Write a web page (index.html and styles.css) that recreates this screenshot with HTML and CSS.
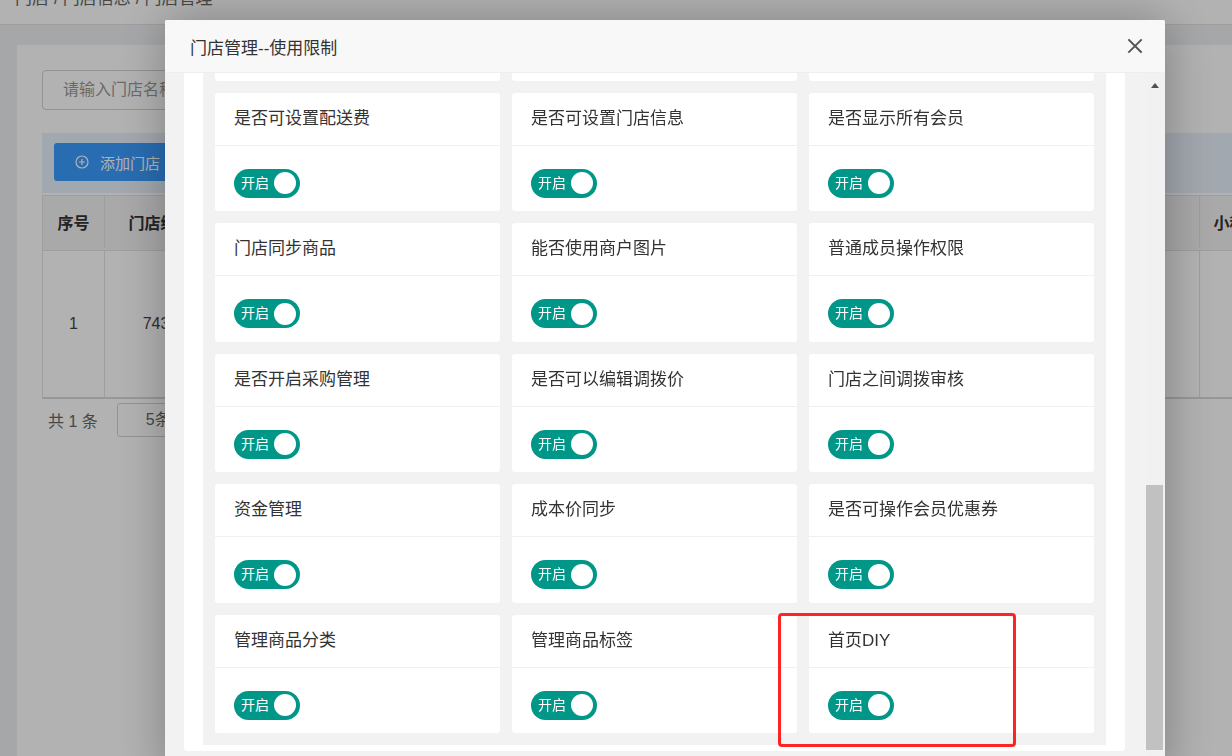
FILE: index.html
```html
<!DOCTYPE html>
<html lang="zh-CN">
<head>
<meta charset="utf-8">
<title>门店管理</title>
<link rel="stylesheet" href="styles.css">
</head>
<body>
<div class="page">
  <div class="crumb"><span class="crumb-text">门店<span class="sep">/</span>门店信息<span class="sep">/</span>门店管理</span></div>
  <div class="main">
    <div class="box">
      <div class="search"><div class="input">请输入门店名称</div></div>
      <div class="toolbar">
        <div class="btn">
          <svg class="btn-ico" viewBox="0 0 14 14" width="14" height="14"><circle cx="7" cy="7" r="6" fill="none" stroke="#fff" stroke-width="1.2"/><path d="M7 4v6M4 7h6" stroke="#fff" stroke-width="1.2"/></svg>
          <span>添加门店</span>
        </div>
      </div>
      <div class="table">
        <div class="tr th">
          <div class="cell">序号</div>
          <div class="cell">门店编号</div>
          <div class="cell">门店名称</div>
          <div class="cell">门店地址</div>
          <div class="cell">营业状态</div>
          <div class="cell">小程序</div>
        </div>
        <div class="tr td">
          <div class="cell">1</div>
          <div class="cell">7432</div>
          <div class="cell">测试门店</div>
          <div class="cell">门店地址</div>
          <div class="cell">营业中营业中营</div>
          <div class="cell"></div>
        </div>
      </div>
      <div class="pager"><span>共 1 条</span><div class="select">5条/页</div></div>
    </div>
  </div>
</div>

<div class="shade"></div>

<div class="layer">
  <div class="layer-title">
    <span>门店管理--使用限制</span>
    <svg class="close" viewBox="0 0 16 16" width="16" height="16"><path d="M2 2L14 14M14 2L2 14" stroke="#555" stroke-width="1.9" stroke-linecap="square"/></svg>
  </div>
  <div class="layer-body">
    <div class="scroll">
      <div class="panel">
        <div class="grid">
          <div class="card"><div class="card-hd">是否可设置商品</div><div class="card-bd"><div class="switch"><span>开启</span><i class="knob"></i></div></div></div>
          <div class="card"><div class="card-hd">是否可设置价格</div><div class="card-bd"><div class="switch"><span>开启</span><i class="knob"></i></div></div></div>
          <div class="card"><div class="card-hd">是否可设置库存</div><div class="card-bd"><div class="switch"><span>开启</span><i class="knob"></i></div></div></div>

          <div class="card"><div class="card-hd">是否可设置配送费</div><div class="card-bd"><div class="switch"><span>开启</span><i class="knob"></i></div></div></div>
          <div class="card"><div class="card-hd">是否可设置门店信息</div><div class="card-bd"><div class="switch"><span>开启</span><i class="knob"></i></div></div></div>
          <div class="card"><div class="card-hd">是否显示所有会员</div><div class="card-bd"><div class="switch"><span>开启</span><i class="knob"></i></div></div></div>

          <div class="card"><div class="card-hd">门店同步商品</div><div class="card-bd"><div class="switch"><span>开启</span><i class="knob"></i></div></div></div>
          <div class="card"><div class="card-hd">能否使用商户图片</div><div class="card-bd"><div class="switch"><span>开启</span><i class="knob"></i></div></div></div>
          <div class="card"><div class="card-hd">普通成员操作权限</div><div class="card-bd"><div class="switch"><span>开启</span><i class="knob"></i></div></div></div>

          <div class="card"><div class="card-hd">是否开启采购管理</div><div class="card-bd"><div class="switch"><span>开启</span><i class="knob"></i></div></div></div>
          <div class="card"><div class="card-hd">是否可以编辑调拨价</div><div class="card-bd"><div class="switch"><span>开启</span><i class="knob"></i></div></div></div>
          <div class="card"><div class="card-hd">门店之间调拨审核</div><div class="card-bd"><div class="switch"><span>开启</span><i class="knob"></i></div></div></div>

          <div class="card"><div class="card-hd">资金管理</div><div class="card-bd"><div class="switch"><span>开启</span><i class="knob"></i></div></div></div>
          <div class="card"><div class="card-hd">成本价同步</div><div class="card-bd"><div class="switch"><span>开启</span><i class="knob"></i></div></div></div>
          <div class="card"><div class="card-hd">是否可操作会员优惠券</div><div class="card-bd"><div class="switch"><span>开启</span><i class="knob"></i></div></div></div>

          <div class="card"><div class="card-hd">管理商品分类</div><div class="card-bd"><div class="switch"><span>开启</span><i class="knob"></i></div></div></div>
          <div class="card"><div class="card-hd">管理商品标签</div><div class="card-bd"><div class="switch"><span>开启</span><i class="knob"></i></div></div></div>
          <div class="card"><div class="card-hd">首页DIY</div><div class="card-bd"><div class="switch"><span>开启</span><i class="knob"></i></div></div><div class="mark"></div></div>
        </div>
      </div>
    </div>
    <div class="scrollbar">
      <div class="sb-up"><i class="sb-arrow"></i></div>
      <div class="sb-thumb"></div>
    </div>
  </div>
</div>
</body>
</html>
```

FILE: styles.css
```css
html, body {
  margin: 0;
  padding: 0;
}
body {
  width: 1232px;
  height: 756px;
  overflow: hidden;
  background: #eef0f3;
  font-family: "Liberation Sans", "Noto Sans CJK SC", sans-serif;
}

/* ---------- background page ---------- */
.page {
  width: 1420px;
}
.crumb {
  height: 25px;
  box-sizing: border-box;
  background: #fff;
  border-bottom: 1px solid #e2e2e2;
  padding-left: 15px;
  font-size: 17px;
  color: #666;
  overflow: hidden;
}
.crumb-text {
  display: block;
  line-height: 17px;
  margin-top: -10px;
  white-space: nowrap;
}
.sep {
  margin: 0 4px 0 5px;
}
.main {
  padding: 20px 0 0 17px;
}
.box {
  width: 1400px;
  height: 720px;
  box-sizing: border-box;
  background: #fff;
  padding: 25px;
}
.input {
  width: 260px;
  height: 40px;
  box-sizing: border-box;
  border: 1px solid #d2d2d2;
  border-radius: 4px;
  padding-left: 20px;
  line-height: 38px;
  font-size: 16px;
  color: #999;
}
.toolbar {
  margin-top: 23px;
  height: 60px;
  box-sizing: border-box;
  background: #e9f1fb;
  padding: 10px 12px;
}
.btn {
  display: inline-flex;
  align-items: center;
  gap: 11px;
  height: 38px;
  padding: 0 22px 0 21px;
  background: #3a9cff;
  color: #fff;
  border-radius: 3px;
  font-size: 15px;
}
.btn-ico {
  display: block;
}
.table {
  margin-top: 2px;
  border-left: 1px solid #e2e2e2;
  border-top: 1px solid #e2e2e2;
  width: 1233px;
}
.tr {
  display: grid;
  grid-template-columns: 62px 112px 400px 401px 182px 76px;
  border-bottom: 1px solid #e2e2e2;
  box-sizing: border-box;
}
.th {
  height: 55px;
  background: #f2f2f2;
  font-weight: bold;
  color: #333;
  padding-bottom: 3px;
}
.td {
  height: 148px;
  border-bottom: 2px solid #d9d9d9;
  color: #444;
}
.cell {
  display: flex;
  align-items: center;
  justify-content: center;
  border-right: 1px solid #e2e2e2;
  font-size: 16px;
  white-space: nowrap;
  overflow: hidden;
}
.pager {
  display: flex;
  align-items: center;
  gap: 19px;
  margin-top: 4px;
  padding-left: 6px;
  font-size: 16px;
  color: #666;
}
.select {
  width: 100px;
  height: 34px;
  box-sizing: border-box;
  border: 1px solid #d2d2d2;
  border-radius: 3px;
  padding-left: 28px;
  line-height: 32px;
}

/* ---------- shade + layer ---------- */
.shade {
  position: fixed;
  left: 0;
  top: 0;
  right: 0;
  bottom: 0;
  background: rgba(0, 0, 0, 0.3);
}
.layer {
  position: fixed;
  left: 165px;
  top: 20px;
  width: 1000px;
  height: 760px;
  background: #f2f2f2;
  border-radius: 2px;
  box-shadow: 1px 1px 50px rgba(0, 0, 0, 0.3);
  display: flex;
  flex-direction: column;
  overflow: hidden;
}
.layer-title {
  flex: none;
  height: 53px;
  box-sizing: border-box;
  border-bottom: 1px solid #eee;
  background: #f8f8f8;
  display: flex;
  align-items: center;
  justify-content: space-between;
  padding: 0 22px 0 25px;
  font-size: 17px;
  color: #333;
}
.close {
  display: block;
}
.layer-body {
  flex: 1;
  min-height: 0;
  display: flex;
}
.scroll {
  flex: 1;
  overflow: hidden;
  padding: 0 21px 0 19px;
}
.panel {
  background: #fff;
  border-radius: 4px;
  padding: 19px 19px 6px;
  margin-top: -142px;
}
.grid {
  background: #f2f2f2;
  padding: 12px;
  display: grid;
  grid-template-columns: repeat(3, 285px);
  column-gap: 12px;
  row-gap: 12px;
}
.card {
  position: relative;
  background: #fff;
  border-radius: 3px;
}
.card-hd {
  height: 53px;
  box-sizing: border-box;
  border-bottom: 1px solid #f0f0f0;
  padding: 0 19px;
  line-height: 52px;
  font-size: 17px;
  color: #333;
  white-space: nowrap;
}
.card-bd {
  padding: 23px 19px 13.5px;
}
.switch {
  display: flex;
  align-items: center;
  justify-content: space-between;
  width: 66px;
  height: 29px;
  box-sizing: border-box;
  border-radius: 15px;
  background: #009688;
  padding: 0 4px 0 7px;
  color: #fff;
  font-size: 14px;
  line-height: 29px;
}
.knob {
  display: block;
  width: 22px;
  height: 22px;
  border-radius: 50%;
  background: #fff;
}
.mark {
  position: absolute;
  left: -31px;
  top: -2px;
  width: 238px;
  height: 134px;
  box-sizing: border-box;
  border: 3px solid #ff2424;
  border-radius: 4px;
}

/* ---------- fake scrollbar ---------- */
.scrollbar {
  flex: none;
  width: 19px;
  box-sizing: border-box;
  padding-right: 2px;
  background: #f1f1f1;
  display: flex;
  flex-direction: column;
}
.sb-up {
  height: 17px;
  box-sizing: border-box;
  padding-top: 10px;
  display: flex;
  justify-content: center;
}
.sb-arrow {
  display: block;
  width: 0;
  height: 0;
  border-left: 4.5px solid transparent;
  border-right: 4.5px solid transparent;
  border-bottom: 5px solid #505050;
}
.sb-thumb {
  margin-top: 395px;
  height: 265px;
  background: #c1c1c1;
}
```
